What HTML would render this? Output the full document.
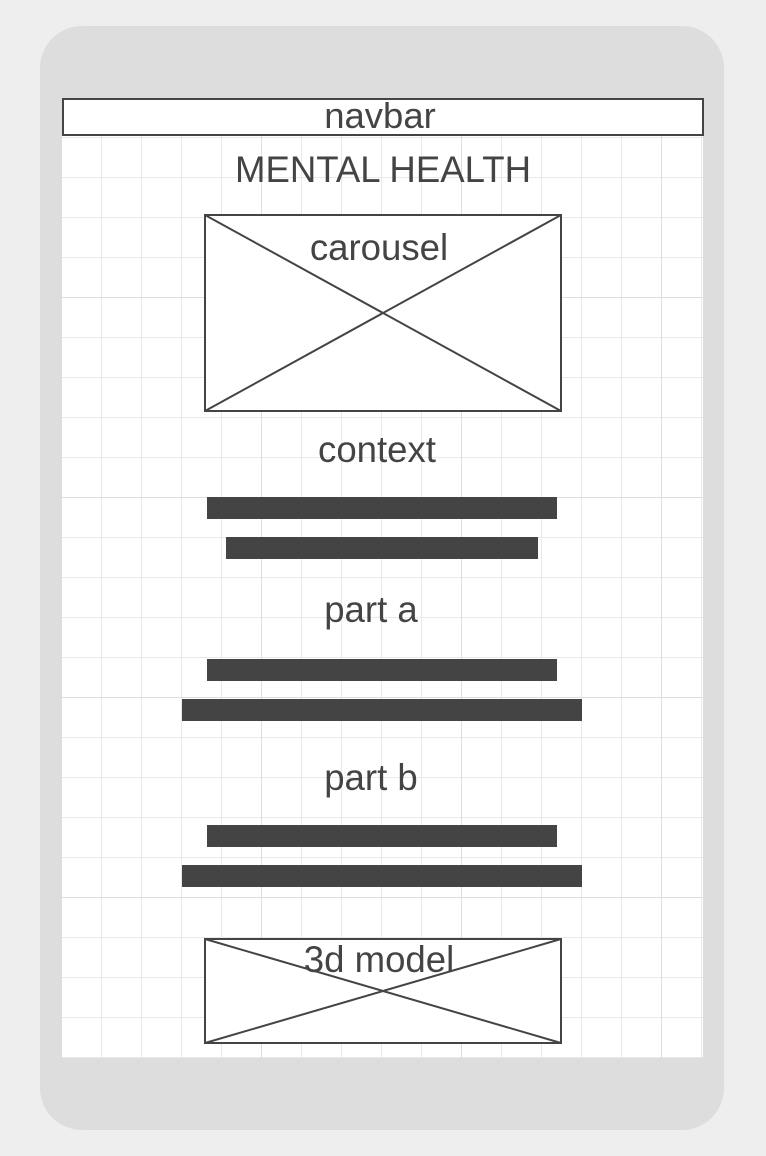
<!DOCTYPE html>
<html><head><style>
html,body{margin:0;padding:0;background:#eeeeee;width:766px;height:1156px;overflow:hidden}
svg{display:block}
text{font-family:"Liberation Sans",sans-serif;fill:#444}
</style></head><body>
<svg width="766" height="1156" viewBox="0 0 766 1156" xmlns="http://www.w3.org/2000/svg">
<defs>
<pattern id="g" x="62" y="98" width="40" height="40" patternUnits="userSpaceOnUse">
<rect x="39" y="0" width="2" height="40" fill="#e9e9e9"/>
<rect x="0" y="39" width="40" height="2" fill="#e9e9e9"/>
</pattern>
<pattern id="G" x="62" y="98" width="200" height="200" patternUnits="userSpaceOnUse">
<rect x="199" y="0" width="2" height="200" fill="#dedede"/>
<rect x="0" y="199" width="200" height="2" fill="#dedede"/>
</pattern>
</defs>
<rect x="40" y="26" width="684" height="1104" rx="42" fill="#dddddd"/>
<rect x="62" y="98" width="641" height="960" fill="#fff"/>
<rect x="62" y="98" width="641" height="960" fill="url(#g)"/>
<rect x="62" y="98" width="641" height="960" fill="url(#G)"/>
<rect x="63" y="99" width="640" height="36" fill="#fff" stroke="#444" stroke-width="2"/>
<text x="380" y="128" text-anchor="middle" style="font-size:36.5px">navbar</text>
<text x="383" y="182" text-anchor="middle" style="font-size:36.6px">MENTAL HEALTH</text>
<rect x="205" y="215" width="356" height="196" fill="#fff" stroke="#444" stroke-width="2"/>
<path d="M205 215L561 411M561 215L205 411" stroke="#444" stroke-width="2"/>
<text x="379" y="260" text-anchor="middle" style="font-size:36.6px">carousel</text>
<text x="377" y="462" text-anchor="middle" style="font-size:36.6px">context</text>
<rect x="207" y="497" width="350" height="22" fill="#444"/>
<rect x="226" y="537" width="312" height="22" fill="#444"/>
<text x="371" y="622" text-anchor="middle" style="font-size:36.6px">part a</text>
<rect x="207" y="659" width="350" height="22" fill="#444"/>
<rect x="182" y="699" width="400" height="22" fill="#444"/>
<text x="371" y="790" text-anchor="middle" style="font-size:36.6px">part b</text>
<rect x="207" y="825" width="350" height="22" fill="#444"/>
<rect x="182" y="865" width="400" height="22" fill="#444"/>
<rect x="205" y="939" width="356" height="104" fill="#fff" stroke="#444" stroke-width="2"/>
<path d="M205 939L561 1043M561 939L205 1043" stroke="#444" stroke-width="2"/>
<text x="379" y="972" text-anchor="middle" style="font-size:36.6px">3d model</text>
</svg>
</body></html>
